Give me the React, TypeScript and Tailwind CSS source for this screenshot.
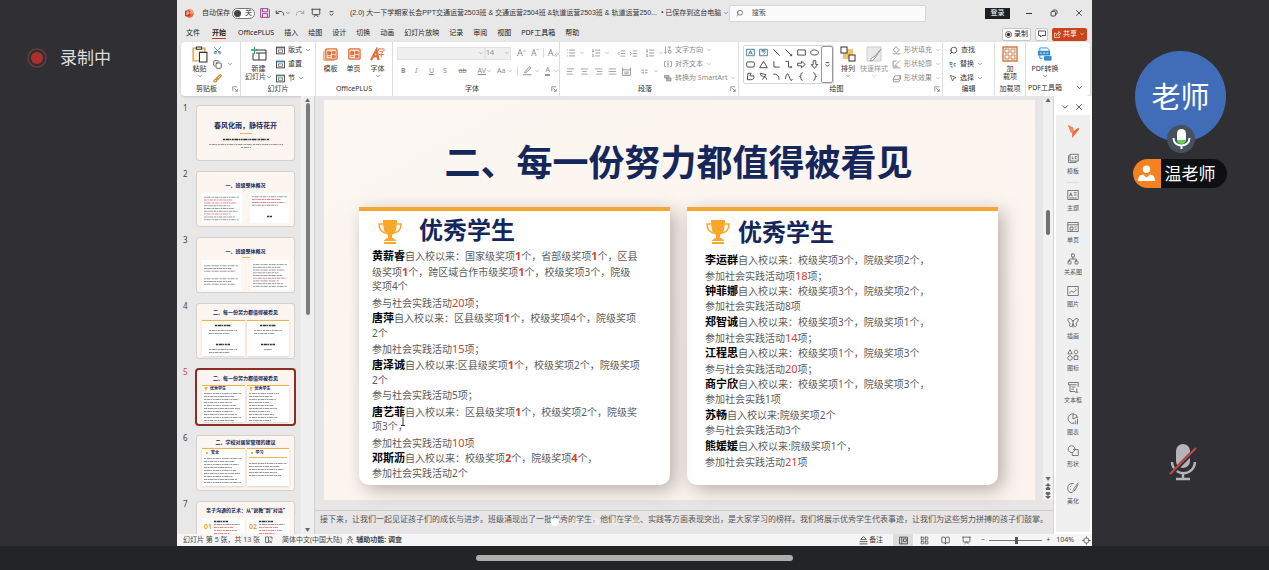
import type { ReactNode } from "react";
import {
  AlignCenter,
  AlignJustify,
  AlignLeft,
  AlignRight,
  BookOpen,
  Brush,
  ChevronDown,
  Copy,
  Indent,
  LayoutGrid,
  List,
  ListOrdered,
  Locate,
  MousePointer2,
  Network,
  Outdent,
  Presentation,
  Redo,
  Scissors,
  Search,
  Undo,
  X,
} from "lucide-react";

type SvgProps = { className?: string; box?: string; children: ReactNode };

const Svg = ({ className = "size-4", box = "0 0 16 16", children }: SvgProps) => (
  <svg
    viewBox={box}
    className={`shrink-0 ${className}`}
    fill="none"
    stroke="currentColor"
    strokeWidth="1"
    aria-hidden="true"
  >
    {children}
  </svg>
);

const Caret = () => <ChevronDown className="size-[6px] shrink-0" strokeWidth={2} />;

const Launcher = () => (
  <Svg className="size-[6px]" box="0 0 8 8">
    <path d="M1 7V1h6M3 3l4 4M7 4v3H4" />
  </Svg>
);

/* ---------- title bar and tabs ---------- */

const TitleBar = () => (
  <header className="flex h-[26px] shrink-0 items-center pr-2 pl-2 text-[#333]">
    <Svg className="size-[9px]">
      <circle cx="8" cy="8" r="7.5" fill="#e9683c" stroke="none" />
      <path d="M8 .5A7.5 7.5 0 0 1 15.500 8H8z" fill="#f7a07c" stroke="none" />
      <rect x="0" y="3" width="9" height="10" rx="1" fill="#c13b1b" stroke="none" />
      <path d="M3.500 11V5h2a1.700 1.700 0 0 1 0 3.600h-2" stroke="#fff" strokeWidth="1.300" />
    </Svg>
    <span className="ml-2 whitespace-nowrap">自动保存</span>
    <button
      role="switch"
      aria-checked="false"
      aria-label="自动保存"
      className="ml-[2px] flex h-[11px] w-[23px] shrink-0 items-center gap-1 rounded-full border border-[#777] bg-white pl-[1px]"
    >
      <span className="size-[7px] rounded-full bg-[#444]" />
      <span>关</span>
    </button>
    <button aria-label="保存" className="ml-[5px] text-[#a4459b]">
      <Svg className="size-[10px]">
        <path d="M1 1h12l2 2v12H1zM4 1v5h8V1M4 15V9h8v6" strokeWidth="1.600" />
      </Svg>
    </button>
    <button aria-label="撤消" className="ml-[5px] flex items-center">
      <Undo className="size-[10px]" strokeWidth={2} />
      <Caret />
    </button>
    <button aria-label="重做" className="ml-1 text-[#999]">
      <Redo className="size-[10px]" strokeWidth={2} />
    </button>
    <button aria-label="放映" className="ml-[6px]">
      <Presentation className="size-[10px]" strokeWidth={2} />
    </button>
    <button aria-label="自定义" className="ml-2">
      <Svg className="size-[5px]" box="0 0 8 8">
        <path d="M1 1h6M1 4l3 3 3-3" strokeWidth="1.400" />
      </Svg>
    </button>
    <h1 className="ml-4 shrink-0 font-['Liberation_Sans','Noto_Sans_CJK_SC',sans-serif] whitespace-nowrap">
      (2.0) 大一下学期家长会PPT交通运营2503班 &amp; 交通运营2504班 &amp;轨道运营2503班 &amp; 轨道运营250...
    </h1>
    <button className="ml-1 flex shrink-0 items-center gap-[2px] whitespace-nowrap">
      • 已保存到这台电脑 <Caret />
    </button>
    <label className="ml-auto flex h-[17px] w-[198px] items-center gap-2 rounded-[2px] border border-[#d5d5d5] bg-[#fbfbfb] px-[6px]">
      <Search className="size-[8px] -scale-x-100" strokeWidth={2} />
      <input
        aria-label="搜索"
        placeholder="搜索"
        className="w-full bg-transparent outline-none placeholder:text-[#555]"
      />
    </label>
    <button className="ml-[59px] h-[11px] w-[25px] shrink-0 bg-[#1f1f1f] text-white">登录</button>
    <button aria-label="最小化" className="ml-[14px] flex w-[10px] justify-center">
      <span className="h-px w-[6px] bg-[#333]" />
    </button>
    <button aria-label="还原" className="ml-4">
      <Svg className="size-[8px]">
        <rect x="2" y="5" width="9" height="9" rx="2" strokeWidth="1.800" />
        <path d="M5 3q1-1 3-1h3q3 0 3 3v3q0 2-1 3" strokeWidth="1.800" />
      </Svg>
    </button>
    <button aria-label="关闭" className="ml-4">
      <X className="size-[10px]" strokeWidth={2} />
    </button>
  </header>
);

const tabs = [
  "文件",
  "开始",
  "OfficePLUS",
  "插入",
  "绘图",
  "设计",
  "切换",
  "动画",
  "幻灯片放映",
  "记录",
  "审阅",
  "视图",
  "PDF工具箱",
  "帮助",
];

const TabRow = () => (
  <nav className="flex h-4 shrink-0 items-center pr-[5px] pl-[9px] text-[#222]">
    <div className="flex gap-[10px]">
      {tabs.map((tab) => (
        <button
          key={tab}
          className={
            tab === "开始"
              ? "mx-[2px] border-b border-[#c43e1c] pb-px font-bold"
              : "border-b border-transparent pb-px"
          }
        >
          {tab}
        </button>
      ))}
    </div>
    <button className="ml-auto flex h-[13px] w-[29px] items-center justify-center gap-[2px] rounded-[2px] border border-[#c8c8c8] bg-white">
      <Svg className="size-[7px]">
        <circle cx="8" cy="8" r="7" strokeWidth="1.500" />
        <circle cx="8" cy="8" r="3.500" fill="currentColor" />
      </Svg>
      录制
    </button>
    <button
      aria-label="批注"
      className="ml-1 flex h-[13px] w-[13px] items-center justify-center rounded-[2px] border border-[#c8c8c8] bg-white"
    >
      <Svg className="size-[8px]">
        <path d="M1 2h14v9H8l-3 3v-3H1z" strokeWidth="1.500" />
      </Svg>
    </button>
    <button className="ml-1 flex h-[13px] w-[35px] items-center justify-center gap-[2px] rounded-[2px] bg-[#c8441c] text-white">
      <Svg className="size-[7px]">
        <path d="M5 5H1v10h12v-4M5 11q0-6 6-6V1l4 5-4 4V7" strokeWidth="1.500" />
      </Svg>
      共享
      <Caret />
    </button>
  </nav>
);

/* ---------- ribbon ---------- */

type GroupProps = {
  label: string;
  className: string;
  launcher?: boolean;
  children: ReactNode;
};

const Group = ({ label, className, launcher, children }: GroupProps) => (
  <section
    className={`flex shrink-0 flex-col border-r border-[#dedede] last:border-r-0 ${className}`}
  >
    <div className="flex h-[42px] pt-px">{children}</div>
    <div className="flex h-[10px] items-center">
      <h2 className="flex-1 text-center whitespace-nowrap text-[#333]">{label}</h2>
      {launcher && (
        <button aria-label={`${label}选项`} className="mr-[2px] text-[#777]">
          <Launcher />
        </button>
      )}
    </div>
  </section>
);

type BigProps = { icon: ReactNode; lines: string[]; caret?: boolean; className?: string };

const BigButton = ({ icon, lines, caret, className = "" }: BigProps) => (
  <button className={`flex flex-col items-center pt-[3px] whitespace-nowrap ${className}`}>
    <span className="mb-[3px] flex h-4 items-center">{icon}</span>
    {lines.map((line) => (
      <span key={line} className="flex items-center">
        {line}
        {caret && lines.length > 1 && line === lines[lines.length - 1] && <Caret />}
      </span>
    ))}
    {caret && lines.length === 1 && <Caret />}
  </button>
);

const SmallButton = ({ icon, text, caret }: { icon: ReactNode; text: string; caret?: boolean }) => (
  <button className="flex h-[14px] items-center gap-[3px] whitespace-nowrap">
    {icon}
    {text}
    {caret && <Caret />}
  </button>
);

const SlideIcon = ({ accent }: { accent: string }) => (
  <Svg className="size-[9px]">
    <rect x="1" y="2" width="14" height="12" strokeWidth="1.500" />
    <path d="M1 3h14" stroke={accent} strokeWidth="2.500" />
    <rect x="4" y="7" width="8" height="4" />
  </Svg>
);

const PlusCards = ({ back }: { back?: boolean }) => (
  <Svg className="size-[15px] text-[#e2703a]">
    {back && <path d="M3 3L1 5v9h11l2-2" />}
    <rect x="3" y="2" width="12" height="11" rx="1" fill="#fbe3d6" strokeWidth="1.400" />
    <path d="M5 5h3v3H5zM10 5h3v2h-3zM5 10h3M10 9h3v2h-3z" fill="#e2703a" />
  </Svg>
);

const shapes = [
  "M1 2h12v10H1zM4 10l3-6 3 6M5 8h4",
  "M1 2h12v10H1zM4 4h6M4 6h6M7 10l3-3",
  "M2 2l10 10",
  "M2 2l10 10M12 9v3H9",
  "M1 3h12v8H1z",
  "M7 3c8 0 8 8 0 8s-8-8 0-8",
  "M3 3h8q2 0 2 2v4q0 2-2 2H3q-2 0-2-2V5q0-2 2-2",
  "M7 2l6 10H1z",
  "M3 2v9h9",
  "M2 2h5v9h5M10 9l2 2-2 2",
  "M1 5h6V2l6 5-6 5V9H1z",
  "M5 1h4v6h3l-5 6-5-6h3z",
  "M3 2h5l-2 4h6q2 6-5 6H2z",
  "M2 2q0 5 5 5t5 5M2 2l9 2-6 8",
  "M2 3q9 0 9 9",
  "M2 11q3-14 6-4t5 4",
  "M9 1q-3 0-3 3v1q0 2-2 2 2 0 2 2v1q0 3 3 3",
  "M5 1q3 0 3 3v1q0 2 2 2-2 0-2 2v1q0 3-3 3",
];

const FontGroup = () => (
  <Group label="字体" launcher className="w-[167px] text-[#8a8a8a]">
    <div className="flex flex-col gap-1 pt-[3px] pl-1">
      <div className="flex h-[14px] items-center">
        <div className="flex items-center border border-[#e4e4e4] bg-[#f0f0f0]">
          <select aria-label="字体" className="h-[11px] w-[80px] appearance-none" />
          <Caret />
        </div>
        <div className="flex items-center border border-[#e4e4e4] bg-[#f0f0f0]">
          <select aria-label="字号" className="h-[11px] w-[18px] appearance-none">
            <option>14</option>
          </select>
          <Caret />
        </div>
        <button className="ml-[6px] text-[9px]">A<sup className="text-[6px]">^</sup></button>
        <button className="ml-[5px] text-[8px]">A<sup className="text-[6px]">ˇ</sup></button>
        <span className="mx-1 h-[10px] border-l border-[#ddd]" />
        <button aria-label="清除格式" className="flex items-center text-[9px]">
          A
          <Svg className="mt-[3px] size-[5px]" box="0 0 8 8">
            <path d="M1 5l4-4 2 2-4 4z" />
          </Svg>
        </button>
      </div>
      <div className="flex h-[14px] items-center pl-1">
        <button className="w-[14px] text-left font-bold">B</button>
        <button className="w-[14px] text-left italic">I</button>
        <button className="w-[14px] text-left underline">U</button>
        <button className="w-3 text-left">S</button>
        <button className="w-[15px] line-through">ab</button>
        <button className="flex w-[16px] items-center justify-end underline">AV</button>
        <Caret />
        <button className="ml-[5px] flex items-center gap-[2px]">
          Aa <Caret />
        </button>
        <span className="mx-1 h-[10px] border-l border-[#ddd]" />
        <button aria-label="突出显示" className="flex items-center gap-[2px]">
          <Svg className="size-[10px]">
            <path d="M4 10l8-9 2 2-8 8H4zM1 14h14" strokeWidth="1.500" />
          </Svg>
          <Caret />
        </button>
        <button className="ml-[5px] flex items-center gap-[3px]">
          <span className="h-[10px] border-b-2 border-[#999]">A</span>
          <Caret />
        </button>
      </div>
    </div>
  </Group>
);

const ParagraphGroup = () => (
  <Group label="段落" launcher className="w-[179px] text-[#8a8a8a]">
    <div className="flex w-[104px] flex-col gap-1 pt-[3px] pl-[6px]">
      <div className="flex h-[14px] items-center gap-[3px]">
        <List className="size-[10px]" />
        <Caret />
        <ListOrdered className="ml-[3px] size-[10px]" />
        <Caret />
        <Outdent className="ml-1 size-[9px]" />
        <Indent className="size-[9px]" />
        <ListOrdered className="ml-1 size-[10px]" />
        <Caret />
      </div>
      <div className="flex h-[14px] items-center gap-[5px]">
        <AlignLeft className="size-[9px]" />
        <AlignCenter className="size-[9px]" />
        <AlignRight className="size-[9px]" />
        <AlignJustify className="size-[9px]" />
        <Svg className="size-[9px]">
          <path d="M1 1v14h14V1M1 5h14M4 9h8M4 12h8" strokeWidth="1.500" />
        </Svg>
        <Svg className="ml-[5px] size-[7px]">
          <path d="M1 5h6M9 5h6M1 11h6M9 11h6" strokeWidth="2" />
        </Svg>
        <Caret />
      </div>
    </div>
    <div>
      <SmallButton
        caret
        text="文字方向"
        icon={
          <Svg className="size-[8px]">
            <path d="M3 1v14M1 12l2 3 2-3M8 2h6M11 2v5M9 9h5v5H9z" strokeWidth="1.500" />
          </Svg>
        }
      />
      <SmallButton
        caret
        text="对齐文本"
        icon={
          <Svg className="size-[8px]">
            <path d="M4 3H1v10h3M12 3h3v10h-3M8 1v14M6 8h4" strokeWidth="1.500" />
          </Svg>
        }
      />
      <SmallButton
        caret
        text="转换为 SmartArt"
        icon={
          <Svg className="size-[8px]">
            <path d="M1 3h9v5H1zM5 8h9v6H5z" fill="#bbb" strokeWidth="1.500" />
          </Svg>
        }
      />
    </div>
  </Group>
);

const DrawingGroup = () => (
  <Group label="绘图" launcher className="w-[204px]">
    <div className="mt-[2px] ml-1 flex h-[39px] w-[91px] rounded-[2px] border border-[#d6d6d6]">
      <div className="grid flex-1 grid-cols-6 place-items-center">
        {shapes.map((d, i) => (
          <Svg
            key={d}
            box="0 0 14 14"
            className={i < 2 ? "size-[9px] text-[#2c7092]" : "size-[9px] text-[#333]"}
          >
            <path d={d} strokeWidth="1.300" />
          </Svg>
        ))}
      </div>
      <button
        aria-label="更多形状"
        className="flex w-3 items-center justify-center rounded-[2px] border border-[#999]"
      >
        <Svg className="size-[5px]" box="0 0 8 8">
          <path d="M1 1h6M1 4l3 3 3-3" strokeWidth="1.400" />
        </Svg>
      </button>
    </div>
    <BigButton
      caret
      className="ml-[6px]"
      lines={["排列"]}
      icon={
        <Svg className="size-4">
          <rect x="3" y="3" width="10" height="10" fill="#f4c466" stroke="none" />
          <rect x="1" y="1" width="6" height="6" fill="#fff" />
          <rect x="9" y="9" width="6" height="6" fill="#fff" />
        </Svg>
      }
    />
    <BigButton
      caret
      className="ml-1 text-[#999]"
      lines={["快速样式"]}
      icon={
        <Svg className="size-4">
          <path d="M1 1h14v14H1z" fill="#e9e9e9" stroke="#ccc" />
          <path d="M15 3l-7 8q-3 0-4 4 4 0 5-3z" fill="#fff" />
        </Svg>
      }
    />
    <div className="ml-1 text-[#8a8a8a]">
      <SmallButton
        caret
        text="形状填充"
        icon={
          <Svg className="size-[9px]">
            <path d="M7 1l6 6-5 5-6-5zM1 14h14" strokeWidth="1.500" />
          </Svg>
        }
      />
      <SmallButton
        caret
        text="形状轮廓"
        icon={
          <Svg className="size-[9px]">
            <path d="M8 2H2v9h9M14 1L5 10M1 14h14" strokeWidth="1.500" />
          </Svg>
        }
      />
      <SmallButton
        caret
        text="形状效果"
        icon={
          <Svg className="size-[9px]">
            <path d="M5 3h10l-3 7H2zM2 10l1 4h9l3-5V3" strokeWidth="1.500" />
          </Svg>
        }
      />
    </div>
  </Group>
);

const Ribbon = () => (
  <div className="mr-[2px] ml-1 flex h-[54px] shrink-0 rounded-[4px] bg-white text-[#333] shadow-sm">
    <Group label="剪贴板" launcher className="w-[60px]">
      <BigButton
        caret
        className="ml-[10px]"
        lines={["粘贴"]}
        icon={
          <Svg className="size-[17px]">
            <path d="M2 2h11v12H2z" stroke="#dda052" fill="#fdf3e2" strokeWidth="1.300" />
            <path d="M5 1h5v2H5z" fill="#fff" />
            <path d="M8 6h7v9H8z" fill="#fff" />
          </Svg>
        }
      />
      <div className="ml-[5px]">
        <div className="flex h-[14px] items-center">
          <Scissors className="size-[9px] -rotate-90 text-[#3a6f9a]" />
        </div>
        <div className="flex h-[14px] items-center gap-[5px]">
          <Copy className="size-[9px]" />
          <Caret />
        </div>
        <div className="flex h-[14px] items-center">
          <Brush className="size-[9px] text-[#d08a34]" strokeWidth={3} />
        </div>
      </div>
    </Group>
    <Group label="幻灯片" className="w-[75px]">
      <BigButton
        caret
        className="ml-1"
        lines={["新建", "幻灯片"]}
        icon={
          <Svg className="size-4">
            <path d="M5 4h10v10H2V7" />
            <path d="M5 7h10M8 7v7" />
            <path d="M0 4h7M3.500 1v7" stroke="#3d9c6b" strokeWidth="1.300" />
          </Svg>
        }
      />
      <div className="ml-[4px]">
        <SmallButton caret text="版式" icon={<SlideIcon accent="#666" />} />
        <SmallButton text="重置" icon={<SlideIcon accent="#3b8ac4" />} />
        <SmallButton caret text="节" icon={<SlideIcon accent="#3d9c6b" />} />
      </div>
    </Group>
    <Group label="OfficePLUS" className="w-[77px]">
      <BigButton className="ml-[7px]" lines={["模板"]} icon={<PlusCards back />} />
      <BigButton className="ml-2" lines={["单页"]} icon={<PlusCards />} />
      <BigButton
        caret
        className="ml-[9px]"
        lines={["字体"]}
        icon={
          <Svg className="size-[15px] text-[#e2703a]">
            <path d="M1 14L7 3l2 11M3 10h6" strokeWidth="2.500" />
            <path d="M9 4V2h6v2M10 5h4l-2 2v4M9 8h6" />
          </Svg>
        }
      />
    </Group>
    <FontGroup />
    <ParagraphGroup />
    <DrawingGroup />
    <Group label="编辑" className="w-[52px]">
      <div className="ml-[6px]">
        <SmallButton text="查找" icon={<Search className="size-[9px] -scale-x-100" />} />
        <SmallButton
          caret
          text="替换"
          icon={
            <Svg className="size-[8px] text-[#3a6f9a]">
              <path d="M2 3v6h4V5H2M14 7h-4v5h4M4 11v3h4" strokeWidth="1.500" />
            </Svg>
          }
        />
        <SmallButton caret text="选择" icon={<MousePointer2 className="size-[8px]" />} />
      </div>
    </Group>
    <Group label="加载项" className="w-[31px]">
      <BigButton
        className="mx-auto"
        lines={["加", "载项"]}
        icon={
          <Svg className="size-4 text-[#d27a45]">
            <path d="M1 1h14v14H1z" strokeWidth="1.400" />
            <path d="M3 3h4v4H3zM9 3h4v4H9zM3 9h4v4H3zM9 9h4v4H9z" />
          </Svg>
        }
      />
    </Group>
    <section className="flex w-[38px] shrink-0 flex-col">
      <div className="flex h-[42px] pt-px">
        <BigButton
          caret
          className="mx-auto"
          lines={["PDF转换"]}
          icon={
            <Svg className="size-[15px] text-[#2f8fd0]">
              <path d="M3 5V1h8l2 2v2M3 8v4h3" />
              <rect x="1" y="4" width="13" height="5" fill="#2f8fd0" stroke="none" />
              <path d="M8 10h7v4H8z" fill="#2f8fd0" />
              <path d="M3 6.500h9" stroke="#fff" strokeDasharray="2 1.500" />
            </Svg>
          }
        />
      </div>
      <h2 className="text-center whitespace-nowrap">PDF工具箱</h2>
    </section>
    <button aria-label="折叠功能区" className="mr-[6px] mb-1 ml-auto self-end">
      <ChevronDown className="size-[9px]" />
    </button>
  </div>
);

/* ---------- slide content ---------- */

// *name* is a bold name, [n] a red number, {n} a bold red number
const leftLines = [
  "*黄薪睿*自入校以来：国家级奖项{1}个，省部级奖项{1}个，区县",
  "级奖项{1}个，跨区域合作市级奖项{1}个，校级奖项3个，院级",
  "奖项4个",
  "参与社会实践活动[20]项；",
  "*唐萍*自入校以来：区县级奖项{1}个，校级奖项4个，院级奖项",
  "2个",
  "参加社会实践活动[15]项；",
  "*唐泽诚*自入校以来:区县级奖项{1}个，校级奖项2个，院级奖项",
  "2个",
  "参与社会实践活动5项；",
  "*唐艺菲*自入校以来：区县级奖项{1}个，校级奖项2个，院级奖",
  "项3个，",
  "参加社会实践活动[10]项",
  "*邓斯沥*自入校以来：校级奖项{2}个，院级奖项{4}个，",
  "参加社会实践活动2个",
];

const rightLines = [
  "*李运群*自入校以来：校级奖项3个，院级奖项2个，",
  "参加社会实践活动项[18]项；",
  "*钟菲娜*自入校以来：校级奖项3个，院级奖项2个，",
  "参加社会实践活动8项",
  "*郑智诚*自入校以来：校级奖项3个，院级奖项1个，",
  "参加社会实践活动[14]项；",
  "*江程思*自入校以来：校级奖项1个，院级奖项3个",
  "参与社会实践活动[20]项；",
  "*商宁欣*自入校以来：校级奖项1个，院级奖项3个，",
  "参加社会实践1项",
  "*苏畅*自入校以来:院级奖项2个",
  "参与社会实践活动3个",
  "*熊媛媛*自入校以来:院级奖项1个，",
  "参加社会实践活动[21]项",
];

const Line = ({ text }: { text: string }) => (
  <p className="h-[15px] text-[10px] leading-[15px] whitespace-nowrap">
    {text.split(/(\*.+?\*|\[.+?\]|\{.+?\})/).map((part, i) => {
      const inner = part.slice(1, -1);
      if (part.startsWith("*")) return <b key={i} className="text-[11px] text-black">{inner}</b>;
      if (part.startsWith("[")) return <span key={i} className="text-[11px] text-[#d8402c]">{inner}</span>;
      if (part.startsWith("{")) return <b key={i} className="text-[11px] text-[#d8402c]">{inner}</b>;
      return part;
    })}
  </p>
);

const Trophy = ({ className }: { className: string }) => (
  <Svg className={className} box="0 0 24 24">
    <path
      d="M5 0h14c0 8-1 13-5 15v3c2 0 4 2 4 3h-12c0-1 2-3 4-3v-3C6 13 5 8 5 0zM6 22h12v2H6z"
      fill="#f9a72b"
      stroke="none"
    />
    <path d="M5 4H1c0 5 2 8 7 9M19 4h4c0 5-2 8-7 9" stroke="#f9a72b" strokeWidth="1.400" />
  </Svg>
);

const Slide = () => (
  <article className="mr-2 ml-[9px] flex min-h-0 flex-1 flex-col bg-gradient-to-br from-[#fcf7f2] to-[#fdf3ee] pr-[37px] pb-[15px] pl-[35px] text-[#5c5c5c]">
    <h2 className="pt-[38px] text-center text-[36px] leading-[50px] font-bold whitespace-nowrap text-[#15275a]">
      二、每一份努力都值得被看见
    </h2>
    <div className="mt-[19px] grid min-h-0 flex-1 grid-cols-2 gap-[17px]">
      <section className="relative rounded-b-[10px] border-t-4 border-[#f5a933] bg-white px-[13px] shadow-[5px_5px_18px_rgba(90,80,75,0.42)]">
        <h3 className="flex h-[37px] items-center gap-[17px] pl-[6px] text-[24px] font-bold text-[#15275a]">
          <Trophy className="mt-1 size-6" />
          优秀学生
        </h3>
        <div className="flex h-[233px] flex-col justify-between">
          {leftLines.map((text, i) => (
            <Line key={i} text={text} />
          ))}
        </div>
        {/* text cursor */}
        <Svg className="absolute top-[203px] left-[41px] h-3 w-[6px] text-[#333]" box="0 0 6 12">
          <path d="M1 .5h4M3 .5v11M1 11.500h4" />
        </Svg>
      </section>
      <section className="rounded-b-[10px] border-t-4 border-[#f5a933] bg-white px-[18px] shadow-[5px_5px_18px_rgba(90,80,75,0.42)]">
        <h3 className="flex h-[41px] items-center gap-2 pt-px pl-px text-[24px] font-bold text-[#15275a]">
          <Trophy className="size-6" />
          优秀学生
        </h3>
        <div className="flex h-[217px] flex-col justify-between">
          {rightLines.map((text, i) => (
            <Line key={i} text={text} />
          ))}
        </div>
      </section>
    </div>
  </article>
);

/* ---------- thumbnails ---------- */

type TextureProps = { rows: number; width?: number; red?: number[]; bold?: boolean };

// rows of dashes that stand for body text at thumbnail scale
const Texture = ({ rows, width = 38, red = [], bold }: TextureProps) => (
  <svg
    width={width}
    height={rows * 3}
    viewBox={`0 0 ${width} ${rows * 3}`}
    className="max-w-full shrink-0"
    aria-hidden="true"
  >
    {Array.from({ length: rows }, (_, i) => (
      <path
        key={i}
        d={`M0 ${i * 3 + 1.5}H${width - ((i * 7) % 11)}`}
        stroke={red.includes(i) ? "#dd8a86" : bold ? "#333" : "#999"}
        strokeWidth={bold ? 1.6 : 1.1}
        strokeDasharray={i % 2 ? "3 .6 1.5 .5 4 .7" : "2 .6 4 .5 1 .7"}
      />
    ))}
  </svg>
);

const ThumbTitle = ({ children }: { children: ReactNode }) => (
  <p className="text-center text-[5px] leading-[7px] font-bold whitespace-nowrap text-[#15275a]">
    {children}
  </p>
);

const panel = "flex min-w-0 flex-1 flex-col bg-white p-[2px]";

const thumbs: ReactNode[] = [
  <div className="flex flex-col items-center pt-[15px]">
    <p className="text-[7px] leading-[10px] font-bold whitespace-nowrap text-[#15275a]">
      春风化雨，静待花开
    </p>
    <span className="mt-[2px] mb-1 h-px w-3 bg-[#e8b44d]" />
    <Texture rows={1} width={46} bold />
    <span className="h-[2px]" />
    <Texture rows={1} width={74} />
    <Texture rows={1} width={10} />
  </div>,
  <div className="px-[5px] pt-[10px]">
    <ThumbTitle>一、班级整体概况</ThumbTitle>
    <div className="mt-1 flex h-[30px] gap-2">
      <div className={panel}>
        <Texture rows={9} red={[1, 2, 6]} />
      </div>
      <div className={`${panel} items-center`}>
        <Texture rows={4} red={[1, 2]} />
        <span className="h-2" />
        <Texture rows={1} width={5} bold />
      </div>
    </div>
  </div>,
  <div className="px-[5px] pt-[10px]">
    <ThumbTitle>一、班级整体概况</ThumbTitle>
    <span className="mx-auto mt-[2px] block h-px w-2 bg-[#e8b44d]" />
    <div className="mt-[2px] flex h-[30px] gap-[10px]">
      <div className={`${panel} justify-center gap-1`}>
        <Texture rows={3} />
        <Texture rows={3} />
      </div>
      <div className={panel}>
        <Texture rows={9} red={[5]} />
      </div>
    </div>
  </div>,
  <div className="px-[5px] pt-[5px]">
    <ThumbTitle>二、每一份努力都值得被看见</ThumbTitle>
    <div className="mt-1 flex h-[36px] gap-[2px]">
      {[0, 1].map((n) => (
        <div
          key={n}
          className="flex flex-1 flex-col items-center gap-[2px] border-t border-[#e8b44d] bg-white pt-[3px] shadow-sm"
        >
          <Texture rows={1} width={16} bold />
          <Texture rows={2} width={28} />
          <span className="h-1" />
          <Texture rows={1} width={14} bold />
          <Texture rows={n ? 1 : 2} width={n ? 8 : 28} />
        </div>
      ))}
    </div>
  </div>,
  <div className="px-[5px] pt-[5px]">
    <ThumbTitle>二、每一份努力都值得被看见</ThumbTitle>
    <div className="mt-[3px] flex h-[37px] gap-[2px]">
      {[0, 1].map((n) => (
        <div key={n} className="flex-1 overflow-hidden border-t border-[#e8b44d] bg-white px-[2px] shadow-sm">
          <p className="flex items-center gap-[2px] text-[4px] leading-[6px] font-bold text-[#15275a]">
            <Trophy className="size-[4px]" />
            优秀学生
          </p>
          <Texture rows={10} width={n ? 30 : 38} />
        </div>
      ))}
    </div>
  </div>,
  <div className="px-[5px] pt-[3px]">
    <ThumbTitle>二、学校对居家管理的建议</ThumbTitle>
    <div className="mt-[2px] flex h-[38px] gap-[2px]">
      {["安全", "学习"].map((head, n) => (
        <div key={head} className="flex-1 border-t border-[#e8b44d] bg-white px-[2px] shadow-sm">
          <p className="flex items-center gap-[3px] pl-[2px] text-[4px] leading-[8px] font-bold text-[#15275a]">
            <span className="size-[2px] bg-[#e8b44d]" />
            {head}
          </p>
          {n === 1 && <span className="mb-1 block h-px bg-[#e8b44d]" />}
          <Texture rows={n ? 5 : 9} />
        </div>
      ))}
    </div>
  </div>,
  <div className="px-[5px] pt-[5px]">
    <ThumbTitle>亲子沟通的艺术：从“说教”到“对话”</ThumbTitle>
    <div className="mt-1 flex h-[30px] gap-[3px]">
      {["01", "02"].map((n) => (
        <div key={n} className="flex flex-1 gap-[2px] bg-white p-[2px]">
          <b className="pt-[3px] text-[7px] text-[#e3ab3c]">{n}</b>
          <div>
            <Texture rows={1} width={14} bold />
            <Texture rows={6} width={26} red={[1, 2, 3, 4]} />
          </div>
        </div>
      ))}
    </div>
  </div>,
];

const ThumbPane = () => (
  <aside className="flex w-[138px] shrink-0 overflow-hidden border-r border-[#cfcfcf] pl-[6px]">
    <ol className="flex flex-1 flex-col gap-3 pt-[10px]">
      {thumbs.map((thumb, i) => {
        const active = i === 4;
        return (
          <li key={i} className="flex h-[54px] shrink-0">
            <span
              className={`-mt-[3px] w-[14px] shrink-0 text-[8px] leading-[9px] ${active ? "text-[#d0452c]" : "text-[#444]"}`}
            >
              {i + 1}
            </span>
            <button
              aria-label={`幻灯片 ${i + 1}`}
              className={`block h-[54px] w-[97px] overflow-hidden rounded-[2px] bg-[#fdf5ef] text-left ${
                active ? "ring-2 ring-[#8c2f22]" : "ring-1 ring-[#d4d0ce]"
              }`}
            >
              <div className="h-full">{thumb}</div>
            </button>
          </li>
        );
      })}
    </ol>
    <div className="flex w-[13px] flex-col items-center bg-[#efefef] pt-[2px] pb-[2px] text-[5px] leading-[5px] text-[#666]">
      <span>▲</span>
      <span className="h-[212px] w-1 rounded-full bg-[#7b7b7b]" />
      <span className="mt-auto">▼</span>
    </div>
  </aside>
);

/* ---------- right task pane ---------- */

const tools: { name: string; icon: ReactNode }[] = [
  { name: "主题", icon: <path d="M1 2h14v12H1zM3 10l2-5 2 5M4 8h2M9 5h4M9 8h4M3 12h10" /> },
  { name: "单页", icon: <path d="M1 2h14v12H1zM1 5h14M4 8h4v4H4zM10 8h3M10 11h3" /> },
  { name: "关系图", icon: <Network size={16} strokeWidth={1.5} /> },
  { name: "图片", icon: <path d="M1 2h14v12H1zM3 11l3-3 3 2 4-4M11 5h1" /> },
  { name: "插画", icon: <path d="M8 4v10M8 6Q4 0 1 3q0 4 3 5-2 5 1 5 3-1 3-4M8 6q4-6 7-3 0 4-3 5 2 5-1 5-3-1-3-4" /> },
  { name: "图标", icon: <path d="M4 1l3 5.500H1zM12 1.500a2.500 2.500 0 1 0 .1 0M4 9a3 3 0 1 0 .1 0M9.500 9h5v5h-5z" /> },
  { name: "文本框", icon: <path d="M2 2h13v6M2 2v3h11M4 5v9h7M6 8h5M6 11h3M13 10v5M11 15h4" /> },
  { name: "图表", icon: <path d="M8 1a6.500 6.500 0 1 0 0 13M8 1v7l6-3M8 1a6.500 6.500 0 0 1 6 6M9 15v-3M11.500 15v-5M14 15V8" /> },
  { name: "形状", icon: <path d="M6 1a4.500 4.500 0 1 0 .1 0M8 6h7v8H7v-4" /> },
];

const ToolItem = ({ name, icon }: { name: string; icon: ReactNode }) => (
  <button className="flex h-8 shrink-0 flex-col items-center gap-[3px] text-[6px] whitespace-nowrap text-[#555]">
    <Svg className="size-3">{icon}</Svg>
    {name}
  </button>
);

const ToolPane = () => (
  <aside className="flex w-[39px] shrink-0 flex-col border-l border-[#d5d5d5] bg-white px-[2px] pb-[2px]">
    <div className="flex h-[19px] shrink-0 items-center justify-between pt-[3px] pr-[6px] pl-1 text-[#444]">
      <ChevronDown className="size-[10px]" />
      <X className="size-[10px]" />
    </div>
    <div className="flex min-h-0 flex-1 flex-col items-center overflow-hidden bg-[#f0f0f1] pt-[9px]">
      <Svg className="mb-[14px] size-[14px]">
        <path d="M2 1l6 3 1 4 5-4 1 2-8 10V9z" fill="#ee6a3c" stroke="none" />
        <path d="M2 1l6 4 1 7-4-3z" fill="#f58a5c" stroke="none" />
      </Svg>
      <ToolItem name="模板" icon={<path d="M4 3h11v9H4zM4 5H2v9h10v-2M7 6v3h2M11 6v3M13 6h-2M13 9h-2" />} />
      <span className="-mt-[2px] mb-[6px] h-px w-3 shrink-0 bg-[#ddd]" />
      {tools.map((tool) => (
        <ToolItem key={tool.name} {...tool} />
      ))}
      <span className="h-[5px] shrink-0" />
      <ToolItem
        name="美化"
        icon={<path d="M9 2Q1 1 1 8t6 6q2-1 1-3M15 1L9 9l1 3 5-9M4 6h1M6 4h1M4 10h1" />}
      />
    </div>
  </aside>
);

/* ---------- notes and status ---------- */

const Notes = () => (
  <div className="relative mt-[10px] h-6 shrink-0 overflow-hidden border-t border-[#cdcbcc] pt-[3px] pl-[5px] text-[8px] leading-[9px] whitespace-nowrap text-[#555]">
    接下来，让我们一起见证孩子们的成长与进步。班级涌现出了一批优秀的学生，他们在学业、实践等方面表现突出，是大家学习的榜样。我们将展示优秀学生代表事迹，让我们为这些努力拼搏的孩子们鼓掌。
    {/* page dots of the meeting client, over the shared screen */}
    <div className="absolute top-[7px] left-[236px] flex gap-[13px]">
      <span className="size-2 rounded-full bg-white" />
      {[1, 2, 3, 4].map((n) => (
        <span key={n} className="size-[7px] rounded-full bg-white/35" />
      ))}
    </div>
  </div>
);

const StatusBar = () => (
  <footer className="flex h-3 shrink-0 items-center bg-[#f5f5f5] pr-[1px] pl-[6px] whitespace-nowrap text-[#444]">
    <span className="w-[82px]">幻灯片 第 5 张，共 13 张</span>
    <Svg className="size-[8px]">
      <path d="M7 2H1v11h6M7 2v11M9 2h5v5M8 9l6 5M14 9l-5 5" strokeWidth="1.500" />
    </Svg>
    <span className="ml-[9px]">简体中文(中国大陆)</span>
    <button className="ml-1 flex items-center gap-[2px] font-bold">
      <Svg className="size-[8px]">
        <path d="M8 1a2 2 0 1 0 .1 0M2 6l4 1v3l-3 5M14 6l-4 1v3l3 5" strokeWidth="1.500" />
      </Svg>
      辅助功能: 调查
    </button>
    <button className="ml-auto flex items-center gap-px">
      <Svg className="size-[9px]">
        <path d="M8 1l5 5H3zM1 10h14M1 14h14" strokeWidth="1.500" />
      </Svg>
      备注
    </button>
    <button aria-label="普通视图" className="ml-[10px] flex h-3 w-5 items-center justify-center bg-[#dcdcdc]">
      <Svg className="size-[9px]">
        <path d="M1 2h14v12H1zM5 2v12M8 5h5v5H8z" strokeWidth="1.500" />
      </Svg>
    </button>
    <LayoutGrid className="ml-[7px] size-[9px]" />
    <BookOpen className="ml-3 size-[9px]" />
    <Presentation className="ml-3 size-[9px]" />
    <span className="ml-[10px]">−</span>
    <input
      type="range"
      aria-label="缩放"
      defaultValue={51}
      className="mx-1 h-px w-[53px] appearance-none bg-[#777] [&::-webkit-slider-thumb]:h-[7px] [&::-webkit-slider-thumb]:w-[3px] [&::-webkit-slider-thumb]:appearance-none [&::-webkit-slider-thumb]:bg-[#555]"
    />
    <span>+</span>
    <span className="ml-[6px]">104%</span>
    <Locate className="ml-2 size-[9px]" />
  </footer>
);

const SharedWindow = () => (
  <main className="flex min-w-0 flex-1 flex-col overflow-hidden bg-[#e9e8e9] text-[7px] leading-[8px]">
    <TitleBar />
    <TabRow />
    <Ribbon />
    <div className="flex min-h-0 flex-1">
      <ThumbPane />
      <div className="flex min-w-0 flex-1 flex-col bg-[#e7e5e6]">
        <div className="flex min-h-0 flex-1 pt-1">
          <Slide />
          <div className="flex w-[10px] flex-col items-center bg-[#f1f1f1] text-[5px] leading-[8px] text-[#666]">
            <span className="-mt-1">▲</span>
            <span className="mt-[106px] h-[25px] w-1 rounded-full bg-[#707070]" />
            <span className="mt-auto">▼</span>
            <Svg className="h-[18px] w-[6px]" box="0 0 6 18">
              <path
                d="M3 1l3 3H0zM3 4l3 3H0zM1 7h4v1H1zM3 17l3-3H0zM3 14l3-3H0zM1 10h4v1H1z"
                fill="currentColor"
                stroke="none"
              />
            </Svg>
          </div>
        </div>
        <Notes />
      </div>
      <ToolPane />
    </div>
    <StatusBar />
  </main>
);

/* ---------- meeting client ---------- */

const Participant = () => (
  <aside className="flex w-[177px] shrink-0 flex-col items-center bg-[#303034] pt-[51px]">
    <div className="relative flex size-[91px] items-center justify-center rounded-full bg-[#416db8] text-[29px] text-white">
      老师
      <span className="absolute -bottom-[11px] flex size-7 items-center justify-center rounded-full bg-[#46515f]">
        <Svg className="size-5" box="0 0 20 20">
          <rect x="6" y="0" width="9" height="14" rx="4.500" fill="#fff" stroke="none" />
          <path d="M6 11h9a4.500 4 0 0 1-9 0z" fill="#5fd84f" stroke="none" />
          <path d="M2.500 9c0 10 16 10 16 0M10.500 16v4" stroke="#fff" strokeWidth="2" />
        </Svg>
      </span>
    </div>
    <div className="mt-[17px] mr-[2px] flex h-[29px] w-[94px] items-center overflow-hidden rounded-full bg-[#0e0f12] text-[17px] text-white">
      <span className="mr-1 flex h-full w-[28px] items-center justify-center bg-[#f58220]">
        <Svg className="size-[17px]">
          <circle cx="8" cy="4" r="3.500" fill="#fff" stroke="none" />
          <path d="M0 15q0-6 5-6l3 3 3-3q5 0 5 6z" fill="#fff" stroke="none" />
        </Svg>
      </span>
      温老师
    </div>
    <button aria-label="麦克风已静音" className="mt-auto mb-[65px] ml-[5px]">
      <Svg className="h-[37px] w-[28px]" box="0 0 28 37">
        <rect x="7" y="0" width="14" height="24" rx="7" fill="#b5b5b8" stroke="none" />
        <path d="M3 18c1 15 22 15 23 0M14 29v6M7 35h14" stroke="#b5b5b8" strokeWidth="2.500" />
        <path d="M1 31L27 5" stroke="#303034" strokeWidth="4" />
        <path d="M1 30L27 4" stroke="#c0484a" strokeWidth="2" />
      </Svg>
    </button>
  </aside>
);

export default function App() {
  return (
    <div className="flex h-screen flex-col overflow-hidden bg-[#232426] font-['Noto_Sans','Noto_Sans_CJK_SC',sans-serif]">
      <div className="flex min-h-0 flex-1">
        <aside className="w-[177px] shrink-0 bg-[#303034] pt-[46px] pl-[27px]">
          <p className="flex items-center gap-[13px] text-[17px] leading-6 text-[#dedede]">
            <Svg className="size-5" box="0 0 20 20">
              <circle cx="10" cy="10" r="9" stroke="#6b3a3d" strokeWidth="1.500" />
              <circle cx="10" cy="10" r="6" fill="#b02e2e" stroke="none" />
            </Svg>
            录制中
          </p>
        </aside>
        <SharedWindow />
        <Participant />
      </div>
      <div className="flex h-6 shrink-0 items-center justify-center">
        <span className="h-[6px] w-1/4 rounded-full bg-[#adadad]" />
      </div>
    </div>
  );
}
